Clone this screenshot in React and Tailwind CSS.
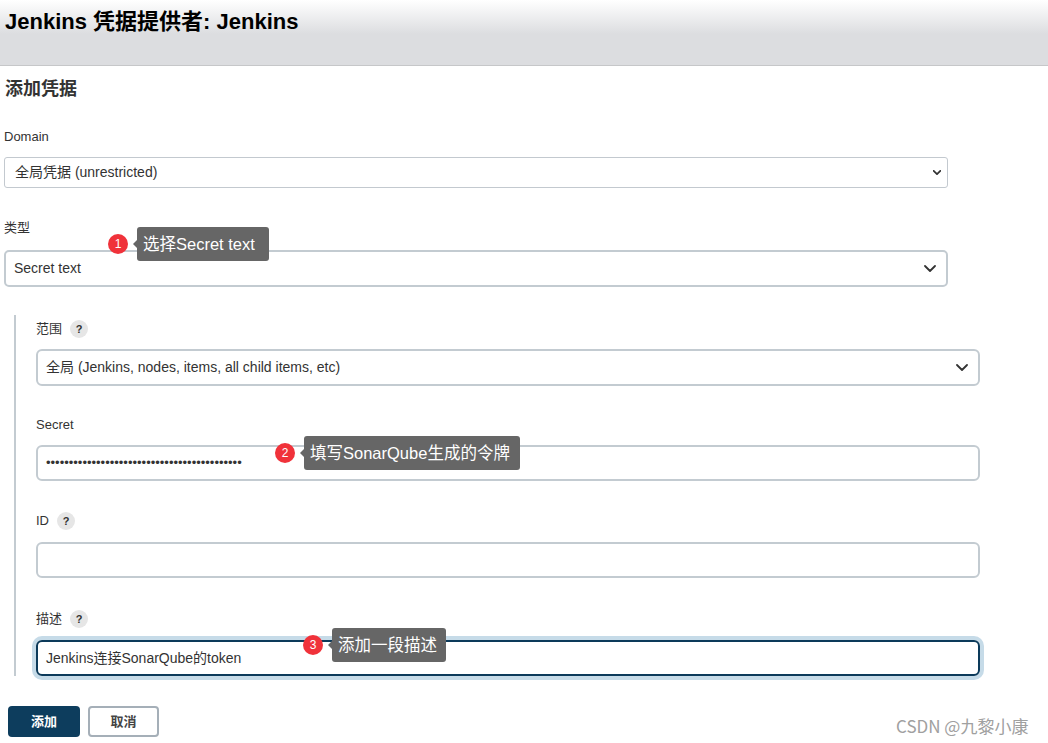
import React from "react";

const font = { fontFamily: '"Liberation Sans", Arial, "Noto Sans CJK SC", sans-serif' };

function Chevron({ className = "", sw = 2 }) {
  return (
    <svg className={className} viewBox="0 0 12 7" fill="none" stroke="#333" strokeWidth={sw} strokeLinecap="round" strokeLinejoin="round">
      <path d="M1 1l5 5 5-5" />
    </svg>
  );
}

function Help() {
  return (
    <span className="ml-[8px] inline-flex h-[18px] w-[18px] items-center justify-center rounded-full bg-[#e6e6e6] text-[11px] font-bold text-[#333]">?</span>
  );
}

function Note({ n, text, left, top, w }) {
  return (
    <div className="absolute flex items-center" style={{ left, top }}>
      <span className="flex h-[20px] w-[20px] items-center justify-center rounded-full bg-[#f0323a] text-[12px] text-white">{n}</span>
      <span className="ml-[5px] h-0 w-0 border-y-[4px] border-r-[4px] border-y-transparent border-r-[#666]" />
      <div className="flex h-[34px] items-center rounded-[3px] bg-[#666] px-[6px] text-[16.5px] text-white" style={{ width: w }}>{text}</div>
    </div>
  );
}

export default function App() {
  return (
    <div className="relative h-[743px] w-[1048px] overflow-hidden bg-white text-[#333]" style={font}>
      <div className="h-[66px] border-b border-[#c6c7c9] bg-[linear-gradient(#ffffff_0px,#dcdde0_34px,#dcdde0_100%)] pl-[5px] pt-[7px]">
        <h1 className="text-[22px] font-bold leading-[30px] text-black">Jenkins 凭据提供者: Jenkins</h1>
      </div>
      <div className="pl-[4px]">
        <h2 className="ml-[1px] mt-[11px] text-[18px] font-bold leading-[24px] text-[#333]">添加凭据</h2>
        <div className="mt-[27px] text-[13px] leading-[18px]">Domain</div>
        <div className="mt-[11px] flex h-[31px] w-[944px] items-center justify-between rounded-[3px] border border-[#c3c9cf] pl-[10px] pr-[6px] text-[14px]">
          <span>全局凭据 (unrestricted)</span>
          <Chevron className="h-[5px] w-[8px]" sw={2.6} />
        </div>
        <div className="mt-[31px] text-[13px] leading-[18px]">类型</div>
        <div className="mt-[13px] flex h-[37px] w-[944px] items-center justify-between rounded-[5px] border-2 border-[#c3cbd1] pl-[8px] pr-[10px] text-[14px]">
          <span>Secret text</span>
          <Chevron className="h-[7px] w-[12px]" sw={1.8} />
        </div>
        <div className="ml-[10px] mt-[28px] w-[966px] border-l-2 border-[#c3cbd1] pl-[20px] pt-[4px]">
          <div className="flex h-[20px] items-center text-[13px]">范围<Help /></div>
          <div className="mt-[10px] flex h-[37px] w-[944px] items-center justify-between rounded-[6px] border-2 border-[#c3cbd1] pl-[8px] pr-[10px] text-[14px]">
            <span>全局 (Jenkins, nodes, items, all child items, etc)</span>
            <Chevron className="h-[7px] w-[12px]" sw={1.8} />
          </div>
          <div className="mt-[29px] flex h-[20px] items-center text-[13px]">Secret</div>
          <div className="mt-[10px] flex h-[36px] w-[944px] items-center rounded-[6px] border-2 border-[#c3cbd1] pl-[8px] text-[13px]">
            {"•".repeat(43)}
          </div>
          <div className="mt-[30px] flex h-[20px] items-center text-[13px]">ID<Help /></div>
          <div className="mt-[11px] h-[36px] w-[944px] rounded-[6px] border-2 border-[#c3cbd1]" />
          <div className="mt-[31px] flex h-[20px] items-center text-[13px]">描述<Help /></div>
          <div className="mt-[11px] flex h-[36px] w-[944px] items-center rounded-[6px] border-2 border-[#0c3a5a] pl-[8px] text-[14px] shadow-[0_0_0_4px_#c6dbe8]">
            Jenkins连接SonarQube的token
          </div>
        </div>
        <div className="ml-[4px] mt-[30px] flex gap-[8px]">
          <button className="h-[31px] w-[72px] rounded-[4px] bg-[#0d3d5d] text-[13px] font-bold text-white">添加</button>
          <button className="h-[31px] w-[71px] rounded-[4px] border-2 border-[#a5afb8] bg-white text-[13px] font-bold text-[#444]">取消</button>
        </div>
      </div>
      <Note n="1" text="选择Secret text" left={108} top={227} w={132} />
      <Note n="2" text="填写SonarQube生成的令牌" left={275} top={436} w={216} />
      <Note n="3" text="添加一段描述" left={303} top={628} w={114} />
      <div className="absolute left-[896px] top-[713px] text-[17px] text-[#a0a0a0]" style={{ fontFamily: '"Noto Sans CJK SC", sans-serif' }}>CSDN @九黎小康</div>
    </div>
  );
}
